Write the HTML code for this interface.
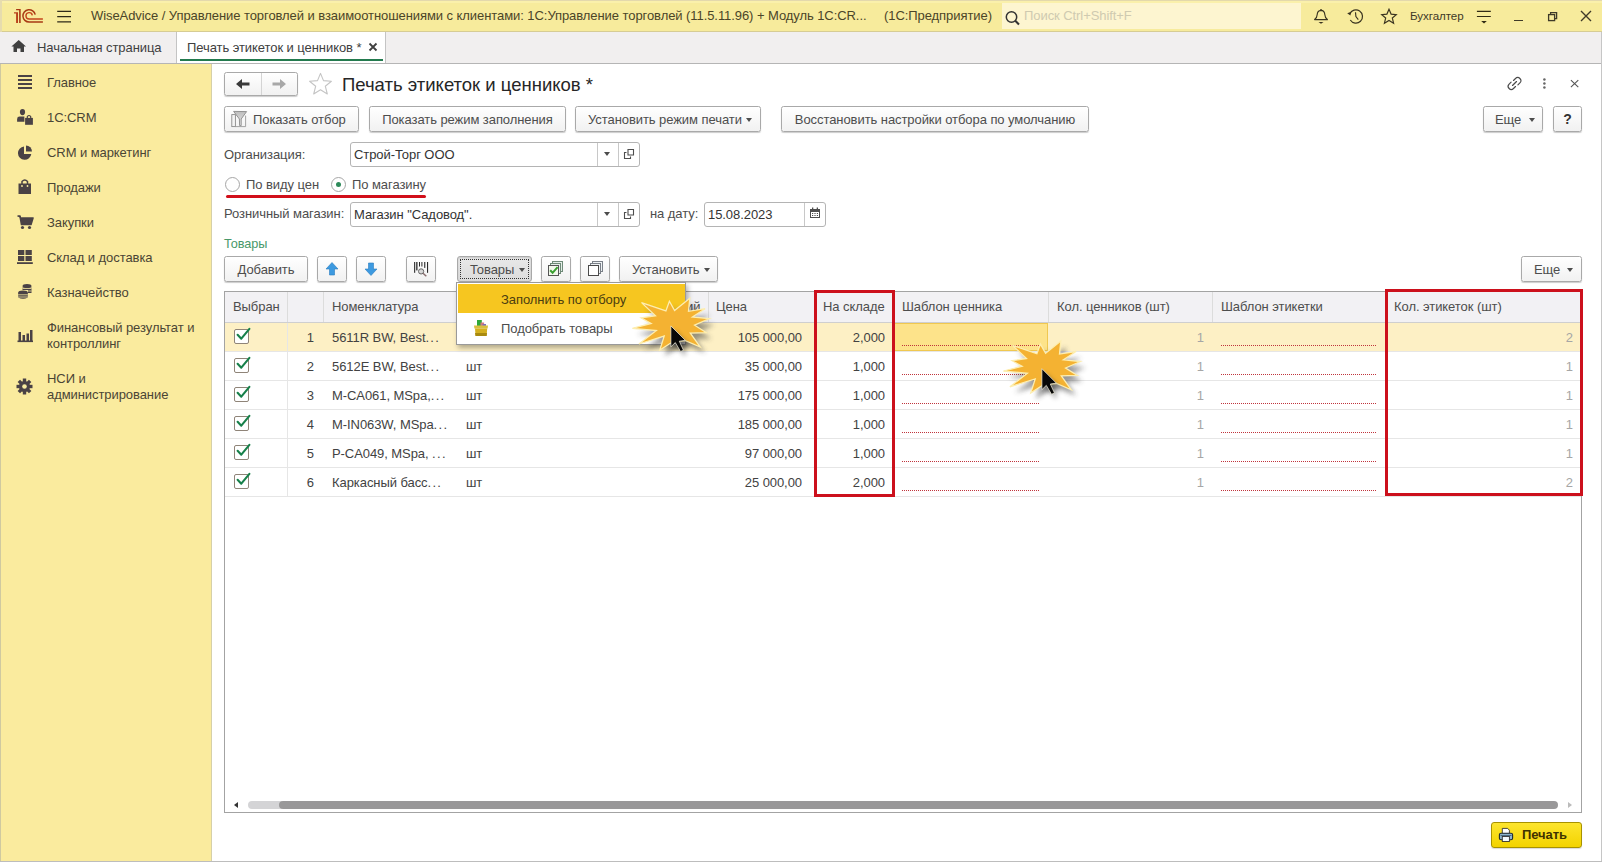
<!DOCTYPE html>
<html><head><meta charset="utf-8">
<style>
*{box-sizing:border-box;margin:0;padding:0}
html,body{width:1602px;height:862px;overflow:hidden;background:#fff}
body{position:relative;font-family:"Liberation Sans",sans-serif;font-size:13px;color:#4d4d4d;letter-spacing:-0.07px}
.a{position:absolute;white-space:nowrap}
#top{left:0;top:0;width:1602px;height:32px;background:#f7eb9c;border-bottom:1px solid #d6cc94}
#tabs{left:0;top:32px;width:1602px;height:32px;background:#f1efef;border-bottom:1px solid #b5b5b5}
#side{left:0;top:64px;width:212px;height:798px;background:#faeb9e;border-right:1px solid #d6d0a8;border-left:1px solid #cfc9a0}
#content{left:212px;top:64px;width:1390px;height:798px;background:#fff}
.btn{position:absolute;height:26px;border:1px solid #a9a9a9;border-radius:2.5px;background:linear-gradient(#fff,#f1f1f1);box-shadow:0 1px 1px rgba(0,0,0,.2);text-align:center;line-height:25px;color:#4d4d4d;white-space:nowrap}
.inp{position:absolute;height:25px;border:1px solid #b4b4b4;border-radius:3px;background:#fff;line-height:23px;padding-left:3px;color:#333;white-space:nowrap}
.sidei{position:absolute;left:47px;color:#4a4535;line-height:16px;white-space:nowrap}
.caret{position:absolute;width:0;height:0;border-left:3.5px solid transparent;border-right:3.5px solid transparent;border-top:4px solid #4d4d4d}
.radio{position:absolute;width:15px;height:15px;border-radius:50%;border:1px solid #a6a6a6;background:#fff}
.chk{position:absolute;width:15px;height:15px;border:1px solid #8f8478;border-radius:2px;background:#fff}
.dots{position:absolute;height:1px;border-top:1px dotted #c0343c}
</style></head><body>
<div id="top" class="a"></div>
<div id="tabs" class="a"></div>
<div id="side" class="a"></div>
<div id="content" class="a"></div>
<div class="a" style="left:1601px;top:32px;width:1px;height:830px;background:#c6c6c6"></div>
<div class="a" style="left:0;top:861px;width:1602px;height:1px;background:#bdbdbd"></div>
<!-- TOP BAR -->
<div class="a" style="left:0;top:0;width:1602px;height:1px;background:#e3d8ac"></div><div class="a" style="left:0;top:1px;width:1602px;height:2px;background:#faf0ab"></div><div class="a" style="left:0;top:0;width:2px;height:32px;background:#e6dcae"></div>
<svg class="a" style="left:12px;top:7px" width="34" height="19" viewBox="12 7 34 19">
  <path d="M14 12.2 L18 12.2 L18 22.9 L16.1 22.9 L16.1 13.4 L14 13.4 Z" fill="#b8401a"/>
  <path d="M16.1 9 L20.7 9 L20.7 22.9 L19.1 22.9 L19.1 10.2 L16.1 10.2 Z" fill="#a83a14"/>
  <path d="M35.2 14.6 A6.2 6.2 0 1 0 29.1 22.05 L42.9 22.05" fill="none" stroke="#a83a14" stroke-width="1.5"/>
  <path d="M32.3 15.3 A3.2 3.2 0 1 0 29.1 19 L42.9 19" fill="none" stroke="#c4461c" stroke-width="1.4"/>
</svg>
<svg class="a" style="left:56px;top:9px" width="16" height="15" viewBox="0 0 16 15"><path d="M1.2 2.4 L15 2.4 M1.2 7.7 L15 7.7 M1.2 12.8 L15 12.8" stroke="#2e2a18" stroke-width="1.25"/></svg>
<div class="a" style="left:91px;top:8px;line-height:16px;color:#4b4528">WiseAdvice / Управление торговлей и взаимоотношениями с клиентами: 1С:Управление торговлей (11.5.11.96) + Модуль 1С:CR...</div>
<div class="a" style="left:884px;top:8px;line-height:16px;color:#4b4528">(1С:Предприятие)</div>
<div class="a" style="left:1002px;top:3px;width:299px;height:26px;background:#fdf5d0"></div>
<svg class="a" style="left:1004px;top:10px" width="18" height="16" viewBox="0 0 18 16">
  <circle cx="7.5" cy="7" r="5.2" fill="none" stroke="#333" stroke-width="1.5"/>
  <path d="M11.3 10.8 L15 14.5" stroke="#333" stroke-width="2"/>
</svg>
<div class="a" style="left:1024px;top:8px;line-height:16px;color:#cfcab0">Поиск Ctrl+Shift+F</div>
<!-- bell -->
<svg class="a" style="left:1312px;top:8px" width="18" height="17" viewBox="0 0 18 17">
  <path d="M2.6 11.6 Q5 10 5.2 6.5 Q5.5 2.6 9 2.4 Q12.5 2.6 12.8 6.5 Q13 10 15.4 11.6 Z" fill="none" stroke="#3a3420" stroke-width="1.15" stroke-linejoin="round"/>
  <path d="M9 0.9 L9 2.4" stroke="#3a3420" stroke-width="1.3"/>
  <path d="M6.5 14.1 L11.5 14.1 L9 15.7 Z" fill="#3a3420"/>
</svg>
<!-- history -->
<svg class="a" style="left:1346px;top:8px" width="19" height="17" viewBox="0 0 19 17">
  <path d="M3.8 6 A6.6 6.6 0 1 1 4.3 12" fill="none" stroke="#3a3420" stroke-width="1.2"/>
  <path d="M1.2 5.2 L5.2 3.8 L4.4 7.6 Z" fill="#3a3420"/>
  <path d="M9.5 4.2 L9.9 8.6 L12.3 11.6" fill="none" stroke="#3a3420" stroke-width="1.15"/>
</svg>
<!-- star -->
<svg class="a" style="left:1380px;top:8px" width="18" height="17" viewBox="0 0 18 17">
  <path d="M9 1.2 L11.1 6.1 L16.3 6.6 L12.3 10 L13.6 15.2 L9 12.4 L4.4 15.2 L5.7 10 L1.7 6.6 L6.9 6.1 Z" fill="none" stroke="#3a3420" stroke-width="1.15" stroke-linejoin="miter"/>
</svg>
<div class="a" style="left:1410px;top:9px;line-height:14px;font-size:11.6px;color:#3f3a28">Бухгалтер</div>
<!-- menu -->
<svg class="a" style="left:1476px;top:9px" width="16" height="17" viewBox="0 0 16 17">
  <path d="M0.9 2.4 L14.8 2.4 M0.9 7.5 L14.8 7.5" stroke="#302a14" stroke-width="1.2"/>
  <path d="M5.2 12 L10.8 12 L8 14.6 Z" fill="#302a14"/>
</svg>
<div class="a" style="left:1514px;top:19.5px;width:9px;height:1.6px;background:#3f3a28"></div>
<svg class="a" style="left:1546px;top:10px" width="13" height="13" viewBox="0 0 13 13">
  <rect x="2.6" y="4.6" width="6" height="6" fill="none" stroke="#3f3a28" stroke-width="1.3"/>
  <path d="M4.6 4.6 L4.6 2.6 L10.6 2.6 L10.6 8.6 L8.6 8.6" fill="none" stroke="#3f3a28" stroke-width="1.3"/>
</svg>
<svg class="a" style="left:1579px;top:9px" width="14" height="14" viewBox="0 0 14 14">
  <path d="M2 2 L12 12 M12 2 L2 12" stroke="#3f3a28" stroke-width="1.4"/>
</svg>

<!-- TABS -->
<svg class="a" style="left:11px;top:39px" width="16" height="14" viewBox="0 0 16 14">
  <path d="M7.7 1 L15 7.4 L13 7.4 L13 13 L9.5 13 L9.5 9.4 L6 9.4 L6 13 L2.5 13 L2.5 7.4 L0.4 7.4 Z" fill="#404040"/>
</svg>
<div class="a" style="left:37px;top:39.5px;line-height:16px;color:#404040">Начальная страница</div>
<div class="a" style="left:176px;top:32px;width:210px;height:31px;background:#fff;border-left:1px solid #c4c4c4;border-right:1px solid #c4c4c4"></div>
<div class="a" style="left:180px;top:59px;width:203px;height:2px;background:#237a4e"></div>
<div class="a" style="left:187px;top:39.5px;line-height:16px;color:#404040">Печать этикеток и ценников *</div>
<svg class="a" style="left:368px;top:42px" width="10" height="10" viewBox="0 0 10 10">
  <path d="M1.5 1.5 L8.5 8.5 M8.5 1.5 L1.5 8.5" stroke="#404040" stroke-width="1.8"/>
</svg>

<!-- SIDEBAR -->
<svg class="a" style="left:17px;top:74px" width="16" height="16" viewBox="0 0 16 16">
  <path d="M1 2 L15 2 M1 6 L15 6 M1 10 L15 10 M1 14 L15 14" stroke="#4a4245" stroke-width="2"/>
</svg>
<div class="sidei" style="top:74.5px">Главное</div>
<svg class="a" style="left:16px;top:108px" width="18" height="18" viewBox="0 0 18 18">
  <ellipse cx="6.5" cy="4.1" rx="2.6" ry="3.1" fill="#4a4245"/>
  <path d="M1.1 13.8 L1.1 11 Q1.1 8.6 3.6 8.6 L8.4 8.6 L8.4 13.8 Z" fill="#4a4245"/>
  <rect x="9.1" y="9.9" width="7.8" height="6.9" fill="#4a4245"/>
  <path d="M11.3 10.2 L11.3 8.6 Q13 6.4 14.7 8.6 L14.7 10.2" fill="none" stroke="#4a4245" stroke-width="1.2"/>
</svg>
<div class="sidei" style="top:109.5px">1С:CRM</div>
<svg class="a" style="left:17px;top:145px" width="16" height="16" viewBox="0 0 16 16">
  <path d="M7 1.5 A6.7 6.7 0 1 0 14.3 9 L7 9 Z" fill="#4a4245"/>
  <path d="M9 0.5 A6 6 0 0 1 15 6.5 L9 6.5 Z" fill="#4a4245"/>
</svg>
<div class="sidei" style="top:144.5px">CRM и маркетинг</div>
<svg class="a" style="left:17px;top:178px" width="16" height="17" viewBox="0 0 16 17">
  <path d="M1.5 5.5 L14 5.5 L14 16 L1.5 16 Z" fill="#4a4245"/>
  <path d="M5 6 L5 3.5 Q7.8 0.5 10.5 3.5 L10.5 6" fill="none" stroke="#4a4245" stroke-width="1.5"/>
  <circle cx="5" cy="8" r="0.9" fill="#f9eca2"/><circle cx="10.5" cy="8" r="0.9" fill="#f9eca2"/>
</svg>
<div class="sidei" style="top:179.5px">Продажи</div>
<svg class="a" style="left:17px;top:214px" width="17" height="16" viewBox="0 0 17 16">
  <path d="M0.5 2 L3 2 L4.5 10.5 L14 10.5 L16 4 L3.5 4" fill="#4a4245" stroke="#4a4245" stroke-width="1.6" stroke-linejoin="round"/>
  <circle cx="5.5" cy="13.5" r="1.6" fill="#4a4245"/><circle cx="12.5" cy="13.5" r="1.6" fill="#4a4245"/>
</svg>
<div class="sidei" style="top:214.5px">Закупки</div>
<svg class="a" style="left:17px;top:249px" width="16" height="16" viewBox="0 0 16 16">
  <rect x="1" y="1" width="6.3" height="5" fill="#4a4245"/><rect x="8.5" y="1" width="6.3" height="5" fill="#4a4245"/>
  <rect x="1" y="7" width="6.3" height="5" fill="#4a4245"/><rect x="8.5" y="7" width="6.3" height="5" fill="#4a4245"/>
  <rect x="0" y="13.2" width="15.8" height="1.8" fill="#4a4245"/>
</svg>
<div class="sidei" style="top:249.5px">Склад и доставка</div>
<svg class="a" style="left:17px;top:283px" width="16" height="17" viewBox="0 0 16 17">
  <ellipse cx="10" cy="3" rx="4.5" ry="2" fill="#4a4245"/>
  <path d="M5.5 4.5 L14.5 4.5 L14.5 10 L11 10 L11 7 L5.5 7 Z" fill="#4a4245"/>
  <path d="M5.5 5.5 L14.5 5.5 M5.5 8 L14.5 8" stroke="#f9eca2" stroke-width="0.8"/>
  <ellipse cx="6" cy="9.5" rx="4.8" ry="2" fill="#4a4245"/>
  <path d="M1.2 10 L10.8 10 L10.8 14.5 Q6 17 1.2 14.5 Z" fill="#4a4245"/>
  <path d="M1.2 11.8 L10.8 11.8 M1.2 14 L10.8 14" stroke="#f9eca2" stroke-width="0.8"/>
</svg>
<div class="sidei" style="top:284.5px">Казначейство</div>
<svg class="a" style="left:17px;top:329px" width="16" height="14" viewBox="0 0 16 14">
  <rect x="1.5" y="3" width="2.5" height="9" fill="#4a4245"/>
  <rect x="5.5" y="6" width="2.5" height="6" fill="#4a4245"/>
  <rect x="9.5" y="4.5" width="2.5" height="7.5" fill="#4a4245"/>
  <rect x="13" y="1" width="2.5" height="11" fill="#4a4245"/>
  <rect x="0.5" y="11.5" width="15.5" height="1.6" fill="#4a4245"/>
</svg>
<div class="sidei" style="top:319.5px">Финансовый результат и<br>контроллинг</div>
<svg class="a" style="left:16px;top:378px" width="17" height="17" viewBox="0 0 17 17">
  <g fill="#4a4245" transform="translate(8.5 8.5)">
    <rect x="-1.7" y="-8" width="3.4" height="16"/>
    <rect x="-1.7" y="-8" width="3.4" height="16" transform="rotate(45)"/>
    <rect x="-1.7" y="-8" width="3.4" height="16" transform="rotate(90)"/>
    <rect x="-1.7" y="-8" width="3.4" height="16" transform="rotate(135)"/>
    <circle r="5.5"/>
  </g>
  <circle cx="8.5" cy="8.5" r="2.3" fill="#f9eca2"/>
</svg>
<div class="sidei" style="top:370.5px">НСИ и<br>администрирование</div>

<!-- FORM HEADER -->
<div class="btn" style="left:224px;top:72px;width:74px;height:24px;"></div>
<div class="a" style="left:261px;top:73px;width:1px;height:22px;background:#d4d4d4"></div>
<svg class="a" style="left:235px;top:77px" width="16" height="14" viewBox="0 0 16 14">
  <path d="M1 7 L7 2 L7 5.5 L14.5 5.5 L14.5 8.5 L7 8.5 L7 12 Z" fill="#3a3a3a"/>
</svg>
<svg class="a" style="left:271px;top:77px" width="16" height="14" viewBox="0 0 16 14">
  <path d="M15 7 L9 2 L9 5.5 L1.5 5.5 L1.5 8.5 L9 8.5 L9 12 Z" fill="#a8a8a8"/>
</svg>
<svg class="a" style="left:308px;top:72px" width="25" height="24" viewBox="0 0 25 24">
  <path d="M12.5 1.4 L15.5 8.6 L23.4 9.2 L17.3 14.2 L19.3 22 L12.5 17.8 L5.7 22 L7.7 14.2 L1.6 9.2 L9.5 8.6 Z" fill="none" stroke="#c4c4c4" stroke-width="1.1" stroke-linejoin="round"/>
</svg>
<div class="a" style="left:342px;top:75px;font-size:18.5px;line-height:20px;color:#262626;letter-spacing:0">Печать этикеток и ценников *</div>
<svg class="a" style="left:1505px;top:74px" width="19" height="19" viewBox="0 0 19 19">
  <path d="M8.5 6.5 L10.5 4.5 Q12.7 2.3 14.9 4.5 Q17.1 6.7 14.9 8.9 L12.9 10.9" fill="none" stroke="#4a4a4a" stroke-width="1.15" stroke-linecap="round"/>
  <path d="M10.5 12.5 L8.5 14.5 Q6.3 16.7 4.1 14.5 Q1.9 12.3 4.1 10.1 L6.1 8.1" fill="none" stroke="#4a4a4a" stroke-width="1.15" stroke-linecap="round"/>
  <path d="M7.5 11.5 L11.5 7.5" stroke="#4a4a4a" stroke-width="1.15" stroke-linecap="round"/>
</svg>
<svg class="a" style="left:1541px;top:76px" width="6" height="14" viewBox="0 0 6 14">
  <circle cx="3.4" cy="3.4" r="1.25" fill="#666"/><circle cx="3.4" cy="7.6" r="1.25" fill="#666"/><circle cx="3.4" cy="11.6" r="1.25" fill="#666"/>
</svg>
<svg class="a" style="left:1569px;top:78px" width="11" height="11" viewBox="0 0 11 11">
  <path d="M1.9 2.2 L9.3 9.2 M9.3 2.2 L1.9 9.2" stroke="#555" stroke-width="1.1"/>
</svg>

<!-- BUTTON ROW -->
<div class="btn" style="left:224px;top:106px;width:135px;">&nbsp;</div>
<svg class="a" style="left:229px;top:109px" width="20" height="20" viewBox="229 109 20 20">
  <defs><linearGradient id="fg" x1="0" y1="0" x2="0" y2="1"><stop offset="0" stop-color="#bdbdbd"/><stop offset="1" stop-color="#e8e8e8"/></linearGradient></defs>
  <rect x="231.8" y="114.6" width="3.6" height="12" fill="#f4f4f4" stroke="#8a8a8a" stroke-width="0.9"/>
  <path d="M235.4 126.6 L245.6 126.6 L245.6 115.6" fill="none" stroke="#9a9a9a" stroke-width="0.9"/>
  <path d="M233.6 111.4 L246.6 111.6 L241.2 119 L241.2 125.6 L239.6 125.6 L239.4 119 Z" fill="url(#fg)" stroke="#8a8a8a" stroke-width="0.9" stroke-linejoin="round"/>
</svg>
<div class="a" style="left:253px;top:111.5px;line-height:16px">Показать отбор</div>
<div class="btn" style="left:369px;top:106px;width:197px;">Показать режим заполнения</div>
<div class="btn" style="left:575px;top:106px;width:186px;text-align:left;padding-left:12px">Установить режим печати</div>
<div class="caret" style="left:746px;top:118px"></div>
<div class="btn" style="left:781px;top:106px;width:308px;">Восстановить настройки отбора по умолчанию</div>
<div class="btn" style="left:1483px;top:106px;width:60px;text-align:left;padding-left:11px">Еще</div>
<div class="caret" style="left:1529px;top:118px"></div>
<div class="btn" style="left:1553px;top:106px;width:29px;font-weight:bold;font-size:14px;color:#333">?</div>

<!-- FORM FIELDS -->
<div class="a" style="left:224px;top:146.5px;line-height:16px">Организация:</div>
<div class="inp" style="left:350px;top:142px;width:290px;">Строй-Торг ООО</div>
<div class="a" style="left:597px;top:143px;width:1px;height:23px;background:#c8c8c8"></div>
<div class="a" style="left:618px;top:143px;width:1px;height:23px;background:#c8c8c8"></div>
<div class="caret" style="left:604px;top:152px"></div>
<svg class="a" style="left:623px;top:148px" width="12" height="12" viewBox="0 0 12 12">
  <path d="M5 1.5 L10.5 1.5 L10.5 7 L5 7 Z" fill="none" stroke="#4d4d4d" stroke-width="1.1"/>
  <path d="M3.5 4.5 L1.5 4.5 L1.5 10.5 L7.5 10.5 L7.5 8.5" fill="none" stroke="#4d4d4d" stroke-width="1.1"/>
</svg>

<div class="radio" style="left:225px;top:177px"></div>
<div class="a" style="left:246px;top:177px;line-height:16px">По виду цен</div>
<div class="radio" style="left:331px;top:177px"><div style="position:absolute;left:4px;top:4px;width:5px;height:5px;border-radius:50%;background:#2d8a5a"></div></div>
<div class="a" style="left:352px;top:177px;line-height:16px">По магазину</div>
<div class="a" style="left:226px;top:195px;width:200px;height:3px;background:#d10f1a;border-radius:1.5px"></div>

<div class="a" style="left:224px;top:205.5px;line-height:16px">Розничный магазин:</div>
<div class="inp" style="left:350px;top:202px;width:290px;">Магазин "Садовод".</div>
<div class="a" style="left:597px;top:203px;width:1px;height:23px;background:#c8c8c8"></div>
<div class="a" style="left:618px;top:203px;width:1px;height:23px;background:#c8c8c8"></div>
<div class="caret" style="left:604px;top:212px"></div>
<svg class="a" style="left:623px;top:208px" width="12" height="12" viewBox="0 0 12 12">
  <path d="M5 1.5 L10.5 1.5 L10.5 7 L5 7 Z" fill="none" stroke="#4d4d4d" stroke-width="1.1"/>
  <path d="M3.5 4.5 L1.5 4.5 L1.5 10.5 L7.5 10.5 L7.5 8.5" fill="none" stroke="#4d4d4d" stroke-width="1.1"/>
</svg>
<div class="a" style="left:650px;top:205.5px;line-height:16px">на дату:</div>
<div class="inp" style="left:704px;top:202px;width:122px;">15.08.2023</div>
<div class="a" style="left:804px;top:203px;width:1px;height:23px;background:#c8c8c8"></div>
<svg class="a" style="left:809px;top:207px" width="12" height="12" viewBox="0 0 12 12">
  <rect x="1" y="2" width="10" height="9" fill="#4d4d4d"/>
  <rect x="2" y="5" width="8" height="5" fill="#fff"/>
  <g fill="#4d4d4d"><rect x="3" y="6" width="1.2" height="1"/><rect x="5.4" y="6" width="1.2" height="1"/><rect x="7.8" y="6" width="1.2" height="1"/><rect x="3" y="8" width="1.2" height="1"/><rect x="5.4" y="8" width="1.2" height="1"/><rect x="7.8" y="8" width="1.2" height="1"/></g>
  <rect x="3" y="0.5" width="1.3" height="2.5" fill="#4d4d4d"/><rect x="7.7" y="0.5" width="1.3" height="2.5" fill="#4d4d4d"/>
</svg>

<div class="a" style="left:224px;top:236px;line-height:16px;font-size:12.7px;color:#48986a">Товары</div>

<!-- TABLE TOOLBAR -->
<div class="btn" style="left:224px;top:256px;width:84px;">Добавить</div>
<div class="btn" style="left:317px;top:256px;width:30px;"></div>
<svg class="a" style="left:324px;top:261px" width="16" height="16" viewBox="0 0 16 16">
  <path d="M8 1.5 L14 8 L10.5 8 L10.5 14 L5.5 14 L5.5 8 L2 8 Z" fill="#3d9ae0" stroke="#2a7cc0" stroke-width="0.6"/>
</svg>
<div class="btn" style="left:356px;top:256px;width:30px;"></div>
<svg class="a" style="left:363px;top:261px" width="16" height="16" viewBox="0 0 16 16">
  <path d="M8 14.5 L14 8 L10.5 8 L10.5 2 L5.5 2 L5.5 8 L2 8 Z" fill="#3d9ae0" stroke="#2a7cc0" stroke-width="0.6"/>
</svg>
<div class="btn" style="left:406px;top:256px;width:30px;"></div>
<svg class="a" style="left:413px;top:260px" width="16" height="18" viewBox="0 0 16 18">
  <g fill="#2a2a2a"><rect x="1.1" y="2" width="1.1" height="10.8"/><rect x="3.2" y="2" width="1.3" height="8.4"/><rect x="6" y="2" width="1" height="4.5"/><rect x="8.4" y="2" width="1" height="4.5"/><rect x="11.2" y="2" width="1.1" height="5.9"/><rect x="14" y="2" width="1.1" height="10.8"/></g>
  <circle cx="8.1" cy="11.4" r="2.6" fill="#d8d8d8" stroke="#666" stroke-width="1"/>
  <path d="M10 13.3 L13.3 16.3" stroke="#8a7070" stroke-width="1.5"/>
</svg>
<div class="a" style="left:457px;top:256px;width:75px;height:26px;border:1px solid #a9a9a9;border-radius:3px;background:linear-gradient(#e9e9e9,#dcdcdc);box-shadow:inset 0 1px 2px rgba(0,0,0,.15)"></div>
<div class="a" style="left:460px;top:259px;width:69px;height:20px;border:1px dotted #333"></div>
<div class="a" style="left:470px;top:261.5px;line-height:16px">Товары</div>
<div class="caret" style="left:519px;top:268px"></div>
<div class="btn" style="left:541px;top:256px;width:30px;"></div>
<svg class="a" style="left:547px;top:261px" width="17" height="16" viewBox="0 0 17 16">
  <rect x="5.5" y="0.5" width="10" height="10" fill="#e4eee8" stroke="#6f8a78" stroke-width="1"/>
  <rect x="3.5" y="2.5" width="10" height="10" fill="#e4eee8" stroke="#6f8a78" stroke-width="1"/>
  <rect x="1.5" y="4.5" width="10" height="10" fill="#f2f8ec" stroke="#555" stroke-width="1"/>
  <path d="M3.2 9.3 L5.6 11.8 L10.6 6.2" fill="none" stroke="#3aa030" stroke-width="2"/>
</svg>
<div class="btn" style="left:580px;top:256px;width:30px;"></div>
<svg class="a" style="left:587px;top:261px" width="17" height="16" viewBox="0 0 17 16">
  <rect x="5.5" y="0.5" width="10" height="10" fill="#eef2f4" stroke="#7a8088" stroke-width="1"/>
  <rect x="3.5" y="2.5" width="10" height="10" fill="#eef2f4" stroke="#7a8088" stroke-width="1"/>
  <rect x="1.5" y="4.5" width="10" height="10" fill="#fff" stroke="#4a4a4a" stroke-width="1"/>
</svg>
<div class="btn" style="left:619px;top:256px;width:99px;text-align:left;padding-left:12px">Установить</div>
<div class="caret" style="left:704px;top:268px"></div>
<div class="btn" style="left:1521px;top:256px;width:61px;text-align:left;padding-left:12px">Еще</div>
<div class="caret" style="left:1567px;top:268px"></div>

<!-- TABLE -->
<div class="a" style="left:224px;top:291px;width:1358px;height:522px;border:1px solid #a3a3a3;background:#fff"></div>
<div class="a" style="left:225px;top:292px;width:1356px;height:31px;background:#f2f1f4;border-bottom:1px solid #cfcfcf"></div>
<div class="a" style="left:287px;top:292px;width:1px;height:30px;background:#dcdcdc"></div>
<div class="a" style="left:323px;top:292px;width:1px;height:30px;background:#dcdcdc"></div>
<div class="a" style="left:457px;top:292px;width:1px;height:30px;background:#dcdcdc"></div>
<div class="a" style="left:708px;top:292px;width:1px;height:30px;background:#dcdcdc"></div>
<div class="a" style="left:815px;top:292px;width:1px;height:30px;background:#dcdcdc"></div>
<div class="a" style="left:894px;top:292px;width:1px;height:30px;background:#dcdcdc"></div>
<div class="a" style="left:1048px;top:292px;width:1px;height:30px;background:#dcdcdc"></div>
<div class="a" style="left:1212px;top:292px;width:1px;height:30px;background:#dcdcdc"></div>
<div class="a" style="left:1386px;top:292px;width:1px;height:30px;background:#dcdcdc"></div>
<div class="a" style="left:233px;top:298.5px;line-height:16px;color:#4d4d4d">Выбран</div>
<div class="a" style="left:332px;top:298.5px;line-height:16px;color:#4d4d4d">Номенклатура</div>
<div class="a" style="left:686px;top:298.5px;line-height:16px;color:#4d4d4d">ий</div>
<div class="a" style="left:716px;top:298.5px;line-height:16px;color:#4d4d4d">Цена</div>
<div class="a" style="left:823px;top:298.5px;line-height:16px;color:#4d4d4d">На складе</div>
<div class="a" style="left:902px;top:298.5px;line-height:16px;color:#4d4d4d">Шаблон ценника</div>
<div class="a" style="left:1057px;top:298.5px;line-height:16px;color:#4d4d4d">Кол. ценников (шт)</div>
<div class="a" style="left:1221px;top:298.5px;line-height:16px;color:#4d4d4d">Шаблон этикетки</div>
<div class="a" style="left:1394px;top:298.5px;line-height:16px;color:#4d4d4d">Кол. этикеток (шт)</div>
<div class="a" style="left:225px;top:323px;width:1356px;height:29px;background:#fdf0c5;border-bottom:1px solid #e6e6e6"></div>
<div class="a" style="left:287px;top:323px;width:1px;height:29px;background:#e6e6e6"></div>
<div class="a" style="left:894px;top:323px;width:154px;height:28px;background:#fde38a;border:1px solid #f0c850"></div>
<div class="chk" style="left:234px;top:329px"></div>
<svg class="a" style="left:234px;top:327px" width="18" height="16" viewBox="0 0 18 16"><path d="M3.6 7.8 L7.3 11.7 L15.4 1.8" fill="none" stroke="#17804a" stroke-width="2.1" stroke-linecap="round" stroke-linejoin="round"/></svg>
<div class="a" style="left:290px;top:329.5px;width:24px;text-align:right;line-height:16px;color:#424242">1</div>
<div class="a" style="left:332px;top:329.5px;line-height:16px;color:#424242">5611R BW, Best<span style="letter-spacing:1.3px">...</span></div>
<div class="a" style="left:466px;top:329.5px;line-height:16px;color:#424242">шт</div>
<div class="a" style="left:702px;top:329.5px;width:100px;text-align:right;line-height:16px;color:#424242">105 000,00</div>
<div class="a" style="left:815px;top:329.5px;width:70px;text-align:right;line-height:16px;color:#424242">2,000</div>
<div class="dots" style="left:902px;top:345px;width:137px"></div>
<div class="a" style="left:1100px;top:329.5px;width:104px;text-align:right;line-height:16px;color:#a6a6a6">1</div>
<div class="dots" style="left:1221px;top:345px;width:155px"></div>
<div class="a" style="left:1470px;top:329.5px;width:103px;text-align:right;line-height:16px;color:#a6a6a6">2</div>
<div class="a" style="left:225px;top:352px;width:1356px;height:29px;background:#fff;border-bottom:1px solid #e6e6e6"></div>
<div class="a" style="left:287px;top:352px;width:1px;height:29px;background:#e6e6e6"></div>
<div class="chk" style="left:234px;top:358px"></div>
<svg class="a" style="left:234px;top:356px" width="18" height="16" viewBox="0 0 18 16"><path d="M3.6 7.8 L7.3 11.7 L15.4 1.8" fill="none" stroke="#17804a" stroke-width="2.1" stroke-linecap="round" stroke-linejoin="round"/></svg>
<div class="a" style="left:290px;top:358.5px;width:24px;text-align:right;line-height:16px;color:#424242">2</div>
<div class="a" style="left:332px;top:358.5px;line-height:16px;color:#424242">5612E BW, Best<span style="letter-spacing:1.3px">...</span></div>
<div class="a" style="left:466px;top:358.5px;line-height:16px;color:#424242">шт</div>
<div class="a" style="left:702px;top:358.5px;width:100px;text-align:right;line-height:16px;color:#424242">35 000,00</div>
<div class="a" style="left:815px;top:358.5px;width:70px;text-align:right;line-height:16px;color:#424242">1,000</div>
<div class="dots" style="left:902px;top:374px;width:137px"></div>
<div class="a" style="left:1100px;top:358.5px;width:104px;text-align:right;line-height:16px;color:#a6a6a6">1</div>
<div class="dots" style="left:1221px;top:374px;width:155px"></div>
<div class="a" style="left:1470px;top:358.5px;width:103px;text-align:right;line-height:16px;color:#a6a6a6">1</div>
<div class="a" style="left:225px;top:381px;width:1356px;height:29px;background:#fff;border-bottom:1px solid #e6e6e6"></div>
<div class="a" style="left:287px;top:381px;width:1px;height:29px;background:#e6e6e6"></div>
<div class="chk" style="left:234px;top:387px"></div>
<svg class="a" style="left:234px;top:385px" width="18" height="16" viewBox="0 0 18 16"><path d="M3.6 7.8 L7.3 11.7 L15.4 1.8" fill="none" stroke="#17804a" stroke-width="2.1" stroke-linecap="round" stroke-linejoin="round"/></svg>
<div class="a" style="left:290px;top:387.5px;width:24px;text-align:right;line-height:16px;color:#424242">3</div>
<div class="a" style="left:332px;top:387.5px;line-height:16px;color:#424242">M-CA061, MSpa,<span style="letter-spacing:1.3px">...</span></div>
<div class="a" style="left:466px;top:387.5px;line-height:16px;color:#424242">шт</div>
<div class="a" style="left:702px;top:387.5px;width:100px;text-align:right;line-height:16px;color:#424242">175 000,00</div>
<div class="a" style="left:815px;top:387.5px;width:70px;text-align:right;line-height:16px;color:#424242">1,000</div>
<div class="dots" style="left:902px;top:403px;width:137px"></div>
<div class="a" style="left:1100px;top:387.5px;width:104px;text-align:right;line-height:16px;color:#a6a6a6">1</div>
<div class="dots" style="left:1221px;top:403px;width:155px"></div>
<div class="a" style="left:1470px;top:387.5px;width:103px;text-align:right;line-height:16px;color:#a6a6a6">1</div>
<div class="a" style="left:225px;top:410px;width:1356px;height:29px;background:#fff;border-bottom:1px solid #e6e6e6"></div>
<div class="a" style="left:287px;top:410px;width:1px;height:29px;background:#e6e6e6"></div>
<div class="chk" style="left:234px;top:416px"></div>
<svg class="a" style="left:234px;top:414px" width="18" height="16" viewBox="0 0 18 16"><path d="M3.6 7.8 L7.3 11.7 L15.4 1.8" fill="none" stroke="#17804a" stroke-width="2.1" stroke-linecap="round" stroke-linejoin="round"/></svg>
<div class="a" style="left:290px;top:416.5px;width:24px;text-align:right;line-height:16px;color:#424242">4</div>
<div class="a" style="left:332px;top:416.5px;line-height:16px;color:#424242">M-IN063W, MSpa<span style="letter-spacing:1.3px">...</span></div>
<div class="a" style="left:466px;top:416.5px;line-height:16px;color:#424242">шт</div>
<div class="a" style="left:702px;top:416.5px;width:100px;text-align:right;line-height:16px;color:#424242">185 000,00</div>
<div class="a" style="left:815px;top:416.5px;width:70px;text-align:right;line-height:16px;color:#424242">1,000</div>
<div class="dots" style="left:902px;top:432px;width:137px"></div>
<div class="a" style="left:1100px;top:416.5px;width:104px;text-align:right;line-height:16px;color:#a6a6a6">1</div>
<div class="dots" style="left:1221px;top:432px;width:155px"></div>
<div class="a" style="left:1470px;top:416.5px;width:103px;text-align:right;line-height:16px;color:#a6a6a6">1</div>
<div class="a" style="left:225px;top:439px;width:1356px;height:29px;background:#fff;border-bottom:1px solid #e6e6e6"></div>
<div class="a" style="left:287px;top:439px;width:1px;height:29px;background:#e6e6e6"></div>
<div class="chk" style="left:234px;top:445px"></div>
<svg class="a" style="left:234px;top:443px" width="18" height="16" viewBox="0 0 18 16"><path d="M3.6 7.8 L7.3 11.7 L15.4 1.8" fill="none" stroke="#17804a" stroke-width="2.1" stroke-linecap="round" stroke-linejoin="round"/></svg>
<div class="a" style="left:290px;top:445.5px;width:24px;text-align:right;line-height:16px;color:#424242">5</div>
<div class="a" style="left:332px;top:445.5px;line-height:16px;color:#424242">P-CA049, MSpa, <span style="letter-spacing:1.3px">...</span></div>
<div class="a" style="left:466px;top:445.5px;line-height:16px;color:#424242">шт</div>
<div class="a" style="left:702px;top:445.5px;width:100px;text-align:right;line-height:16px;color:#424242">97 000,00</div>
<div class="a" style="left:815px;top:445.5px;width:70px;text-align:right;line-height:16px;color:#424242">1,000</div>
<div class="dots" style="left:902px;top:461px;width:137px"></div>
<div class="a" style="left:1100px;top:445.5px;width:104px;text-align:right;line-height:16px;color:#a6a6a6">1</div>
<div class="dots" style="left:1221px;top:461px;width:155px"></div>
<div class="a" style="left:1470px;top:445.5px;width:103px;text-align:right;line-height:16px;color:#a6a6a6">1</div>
<div class="a" style="left:225px;top:468px;width:1356px;height:29px;background:#fff;border-bottom:1px solid #e6e6e6"></div>
<div class="a" style="left:287px;top:468px;width:1px;height:29px;background:#e6e6e6"></div>
<div class="chk" style="left:234px;top:474px"></div>
<svg class="a" style="left:234px;top:472px" width="18" height="16" viewBox="0 0 18 16"><path d="M3.6 7.8 L7.3 11.7 L15.4 1.8" fill="none" stroke="#17804a" stroke-width="2.1" stroke-linecap="round" stroke-linejoin="round"/></svg>
<div class="a" style="left:290px;top:474.5px;width:24px;text-align:right;line-height:16px;color:#424242">6</div>
<div class="a" style="left:332px;top:474.5px;line-height:16px;color:#424242">Каркасный басс<span style="letter-spacing:1.3px">...</span></div>
<div class="a" style="left:466px;top:474.5px;line-height:16px;color:#424242">шт</div>
<div class="a" style="left:702px;top:474.5px;width:100px;text-align:right;line-height:16px;color:#424242">25 000,00</div>
<div class="a" style="left:815px;top:474.5px;width:70px;text-align:right;line-height:16px;color:#424242">2,000</div>
<div class="dots" style="left:902px;top:490px;width:137px"></div>
<div class="a" style="left:1100px;top:474.5px;width:104px;text-align:right;line-height:16px;color:#a6a6a6">1</div>
<div class="dots" style="left:1221px;top:490px;width:155px"></div>
<div class="a" style="left:1470px;top:474.5px;width:103px;text-align:right;line-height:16px;color:#a6a6a6">2</div>
<div class="a" style="left:814px;top:290px;width:81px;height:207px;border:3px solid #cc101c"></div>
<div class="a" style="left:1385px;top:289px;width:198px;height:207px;border:3px solid #cc101c"></div>
<div class="a" style="left:248px;top:801px;width:36px;height:8px;border-radius:4px;background:#d4d4d6"></div>
<div class="a" style="left:279px;top:801px;width:1279px;height:8px;border-radius:4px;background:#999899"></div>
<svg class="a" style="left:232px;top:801px" width="8" height="8" viewBox="0 0 8 8"><path d="M2 4 L6 1 L6 7 Z" fill="#333"/></svg>
<svg class="a" style="left:1566px;top:801px" width="8" height="8" viewBox="0 0 8 8"><path d="M6 4 L2 1 L2 7 Z" fill="#bbb"/></svg>
<!-- DROPDOWN MENU -->
<div class="a" style="left:456px;top:282px;width:230px;height:63px;background:#fff;border:1px solid #9a9a9a;box-shadow:2px 3px 5px rgba(0,0,0,.3)"></div>
<div class="a" style="left:458px;top:284px;width:227px;height:29px;background:#f6c620"></div>
<div class="a" style="left:501px;top:291.5px;line-height:16px;color:#4a3d10">Заполнить по отбору</div>
<svg class="a" style="left:472px;top:318px" width="18" height="20" viewBox="472 318 18 20"><rect x="477" y="320" width="4.8" height="8" fill="#2fa83a"/><rect x="480.5" y="322.5" width="3.6" height="5" fill="#d07a80"/><rect x="482.6" y="324" width="3.4" height="4" fill="#7a70c0"/><path d="M474 325.6 L488 325.6 L487.6 328.4 L474.4 328.4 Z" fill="#d8c040"/><path d="M475 328.4 L487.2 328.4 L486.6 336 L475.6 336 Z" fill="#d4b020"/><path d="M475 333 L487 333 L486.6 336 L475.6 336 Z" fill="#a88a10"/></svg>
<div class="a" style="left:501px;top:321px;line-height:16px;color:#4d4d4d">Подобрать товары</div>
<svg class="a" style="left:622px;top:288px" width="100" height="80" viewBox="622 288 100 80"><defs><filter id="sh0" x="-20%" y="-20%" width="150%" height="150%"><feGaussianBlur stdDeviation="2.5"/></filter></defs><polygon points="646.5,308.6 670.9,316.9 674.4,307.3 679.6,316.5 694.8,304.3 693.5,317.3 710.1,314.7 697.4,323.0 714.4,324.7 699.6,331.2 711.4,338.6 695.3,339.1 705.3,353.0 690.4,346.7 675.8,349.0 664.8,356.1 669.2,342.1 643.9,350.0 661.3,336.5 637.4,334.3 656.1,329.5 646.1,323.9 660.5,321.7" fill="#333" opacity="0.5" filter="url(#sh0)"/><polygon points="641.5,302.6 665.9,310.9 669.4,301.3 674.6,310.5 689.8,298.3 688.5,311.3 705.1,308.7 692.4,317.0 709.4,318.7 694.6,325.2 706.4,332.6 690.3,333.1 700.3,347.0 685.4,340.7 670.8,343.0 659.8,350.1 664.2,336.1 638.9,344.0 656.3,330.5 632.4,328.3 651.1,323.5 641.1,317.9 655.5,315.7" fill="#f4b232" stroke="#fdeeb0" stroke-width="1.3" stroke-linejoin="miter"/><polygon points="673.9,329.9 673.9,350.8 678.3,346.6 683.5,355.4 686.5,354.3 682.3,345.2 688.3,344.3" fill="#000" opacity="0.35" filter="url(#sh0)"/><polygon points="670.9,325.9 670.9,346.8 675.3,342.6 680.5,351.4 683.5,350.3 679.3,341.2 685.3,340.3" fill="#080808" stroke="#f4f0e0" stroke-width="0.7" stroke-linejoin="miter"/></svg>
<svg class="a" style="left:993px;top:331px" width="100" height="80" viewBox="993 331 100 80"><defs><filter id="sh1" x="-20%" y="-20%" width="150%" height="150%"><feGaussianBlur stdDeviation="2.5"/></filter></defs><polygon points="1017.5,351.4 1041.9,359.7 1045.4,350.1 1050.6,359.3 1065.8,347.1 1064.5,360.1 1081.1,357.5 1068.4,365.8 1085.4,367.5 1070.6,374.0 1082.4,381.4 1066.3,381.9 1076.3,395.8 1061.4,389.5 1046.8,391.8 1035.8,398.9 1040.2,384.9 1014.9,392.8 1032.3,379.3 1008.4,377.1 1027.1,372.3 1017.1,366.7 1031.5,364.5" fill="#333" opacity="0.5" filter="url(#sh1)"/><polygon points="1012.5,345.4 1036.9,353.7 1040.4,344.1 1045.6,353.3 1060.8,341.1 1059.5,354.1 1076.1,351.5 1063.4,359.8 1080.4,361.5 1065.6,368.0 1077.4,375.4 1061.3,375.9 1071.3,389.8 1056.4,383.5 1041.8,385.8 1030.8,392.9 1035.2,378.9 1009.9,386.8 1027.3,373.3 1003.4,371.1 1022.1,366.3 1012.1,360.7 1026.5,358.5" fill="#f4b232" stroke="#fdeeb0" stroke-width="1.3" stroke-linejoin="miter"/><polygon points="1044.9,372.7 1044.9,393.6 1049.3,389.4 1054.5,398.2 1057.5,397.1 1053.3,388.0 1059.3,387.1" fill="#000" opacity="0.35" filter="url(#sh1)"/><polygon points="1041.9,368.7 1041.9,389.6 1046.3,385.4 1051.5,394.2 1054.5,393.1 1050.3,384.0 1056.3,383.1" fill="#080808" stroke="#f4f0e0" stroke-width="0.7" stroke-linejoin="miter"/></svg>
<div class="a" style="left:1491px;top:822px;width:91px;height:26px;border:1px solid #a89200;border-radius:3px;background:linear-gradient(#fde52e,#f3d300);box-shadow:0 1px 1px rgba(0,0,0,.15)"></div>
<svg class="a" style="left:1498px;top:827px" width="16" height="16" viewBox="1498 827 16 16"><path d="M1502.3 828.4 L1507.6 828.4 L1509.4 830.2 L1509.4 833.5 L1502.3 833.5 Z" fill="#fff" stroke="#333" stroke-width="0.9"/><rect x="1499.4" y="833.2" width="13.2" height="6.6" rx="1.6" fill="#8db3cc" stroke="#1e2a30" stroke-width="1.1"/><path d="M1500.5 835.5 L1511.5 835.5" stroke="#4a6a80" stroke-width="1"/><rect x="1502.3" y="836.5" width="7.1" height="5" fill="#f4fbff" stroke="#333" stroke-width="0.9"/></svg>
<div class="a" style="left:1522px;top:826.5px;line-height:16px;font-weight:bold;color:#3f3300">Печать</div>

</body></html>
